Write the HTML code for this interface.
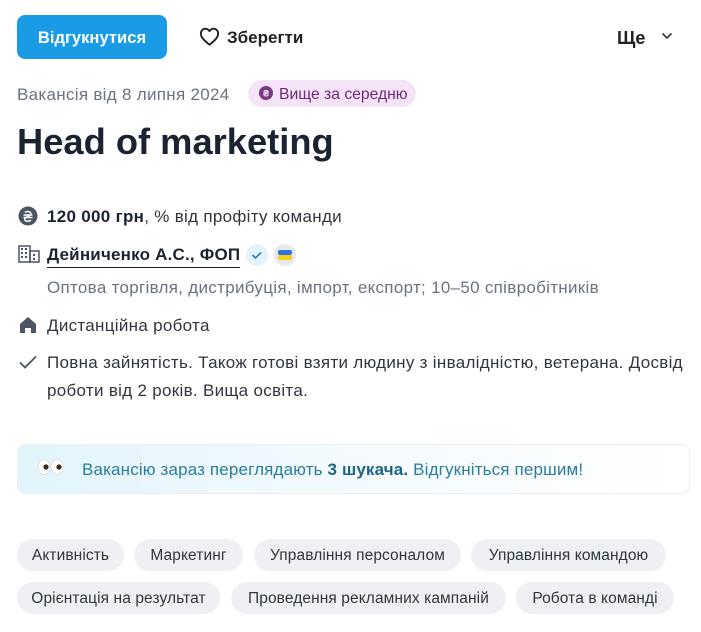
<!DOCTYPE html>
<html><head><meta charset="utf-8"><style>
*{margin:0;padding:0;box-sizing:border-box}
body{width:701px;height:632px;background:#fff;font-family:"Liberation Sans","DejaVu Sans",sans-serif;color:#303640;position:relative;overflow:hidden}
.a{position:absolute;white-space:nowrap}
.btn{left:17px;top:15px;width:150px;height:44px;background:#1a9be6;border-radius:8px;color:#fff;font-weight:bold;font-size:16.6px;line-height:46px;text-align:center}
.t{font-size:17px;line-height:20px;letter-spacing:0.3px}
.tag{position:absolute;height:32px;border-radius:16px;background:#eef0f3;font-size:15.5px;line-height:33px;text-align:center;color:#303640;letter-spacing:0.1px}
</style></head><body>
<div class="a btn">Відгукнутися</div>
<svg class="a" style="left:199px;top:27px" width="21" height="19" viewBox="0 0 24 22"><path d="M12 20.5C5 15 2 11.5 2 7.5 2 4.5 4.3 2 7.2 2c2 0 3.6 1.1 4.8 2.8C13.2 3.1 14.8 2 16.8 2 19.7 2 22 4.5 22 7.5c0 4-3 7.5-10 13z" fill="none" stroke="#222" stroke-width="2.2" stroke-linejoin="round"/></svg>
<div class="a t" style="left:227px;top:28px;font-weight:bold;color:#222;font-size:17px;letter-spacing:0">Зберегти</div>
<div class="a t" style="left:617px;top:28px;font-weight:bold;color:#222;font-size:18px;letter-spacing:0">Ще</div>
<svg class="a" style="left:661px;top:32px" width="12" height="8" viewBox="0 0 12 8"><path d="M1.5 1.5l4.5 4.5 4.5-4.5" fill="none" stroke="#333" stroke-width="1.6"/></svg>
<div class="a t" style="left:17px;top:85px;color:#6b7280">Вакансія від 8 липня 2024</div>
<div class="a" style="left:248px;top:80px;width:168px;height:27px;border-radius:14px;background:#f5e3f7"></div>
<svg class="a" style="left:259px;top:86px" width="14" height="14" viewBox="0 0 14 14"><circle cx="7" cy="7" r="7" fill="#7a3a80"/><text x="7" y="10.5" font-size="9" text-anchor="middle" fill="#f5e3f7" font-family="Liberation Sans" font-weight="bold">₴</text></svg>
<div class="a t" style="left:279px;top:85px;color:#6b2a75;font-size:15.7px;letter-spacing:0">Вище за середню</div>
<div class="a" style="left:17px;top:122px;font-size:36.3px;font-weight:bold;color:#1b2333;line-height:40px">Head of marketing</div>
<svg class="a" style="left:18px;top:206px" width="20" height="20" viewBox="0 0 20 20"><circle cx="10" cy="10" r="9.5" fill="#4b5563"/><path d="M7 6.5c1-1.3 5-1.5 5.8 .8.6 1.8-2 3-4 3.8s-2.6 2.2-1.6 3.4c1 1.2 4.6.9 5.6-.6M5.5 9h9M5.5 11.5h9" fill="none" stroke="#fff" stroke-width="1.5"/></svg>
<div class="a t" style="left:47px;top:207px"><b style="color:#1b2333">120 000 грн</b>, % від профіту команди</div>
<svg class="a" style="left:18px;top:245px" width="22" height="18" viewBox="0 0 22 18"><g fill="none" stroke="#4b5563" stroke-width="1.5"><rect x="1" y="1" width="11" height="16"/><rect x="12" y="6" width="9" height="11"/></g><g fill="#4b5563"><rect x="3" y="3" width="2" height="2"/><rect x="7" y="3" width="2" height="2"/><rect x="3" y="7" width="2" height="2"/><rect x="7" y="7" width="2" height="2"/><rect x="3" y="11" width="2" height="2"/><rect x="7" y="11" width="2" height="2"/><rect x="15" y="9" width="2" height="2"/><rect x="15" y="13" width="2" height="2"/></g></svg>
<div class="a t" style="left:47px;top:245px;font-weight:bold;color:#1b2333;border-bottom:1.5px solid #1b2333;padding-bottom:2px;font-size:17px;letter-spacing:0.2px">Дейниченко А.С., ФОП</div>
<svg class="a" style="left:245px;top:243px" width="52" height="24" viewBox="0 0 52 24"><circle cx="12" cy="12" r="11" fill="#e3f3fc"/><path d="M7.5 12l3 3 5.5-5.5" fill="none" stroke="#1a7fc1" stroke-width="1.6"/><circle cx="40" cy="12" r="11" fill="#e6e8ec"/><rect x="33" y="7" width="14" height="5" rx="2" fill="#2f72d8"/><rect x="33" y="12" width="14" height="5" rx="2" fill="#f5cf1a"/></svg>
<div class="a t" style="left:47px;top:278px;color:#6b7280">Оптова торгівля, дистрибуція, імпорт, експорт; 10–50 співробітників</div>
<svg class="a" style="left:19px;top:316px" width="18" height="18" viewBox="0 0 18 18"><path d="M1 8L9 1l8 7v9h-5v-5H6v5H1z" fill="#4b5563"/></svg>
<div class="a t" style="left:47px;top:316px">Дистанційна робота</div>
<svg class="a" style="left:18px;top:354px" width="20" height="16" viewBox="0 0 20 16"><path d="M2 8.5l5 5L18 2.5" fill="none" stroke="#4b5563" stroke-width="1.8"/></svg>
<div class="a t" style="left:47px;top:349px;line-height:28px">Повна зайнятість. Також готові взяти людину з інвалідністю, ветерана. Досвід<br>роботи від 2 років. Вища освіта.</div>
<div class="a" style="left:17px;top:444px;width:673px;height:50px;border-radius:9px;border:1px solid #eceef1;background:linear-gradient(90deg,#e2f4fc 0%,#f4fafd 50%,#fff 100%)"></div>
<svg class="a" style="left:37px;top:457px" width="28" height="20" viewBox="0 0 28 20"><ellipse cx="7" cy="10" rx="6" ry="7.5" fill="#fff" stroke="#ddd"/><ellipse cx="20" cy="10" rx="6" ry="7.5" fill="#fff" stroke="#ddd"/><circle cx="9" cy="10" r="2.6" fill="#3a2a20"/><circle cx="22" cy="10" r="2.6" fill="#3a2a20"/></svg>
<div class="a t" style="left:82px;top:460px;color:#2a7d9e;font-size:17px;letter-spacing:0.15px">Вакансію зараз переглядають <b style="color:#1d6585">3 шукача.</b> Відгукніться першим!</div>
<div class="tag" style="left:17px;top:539px;width:107px">Активність</div>
<div class="tag" style="left:134px;top:539px;width:109px">Маркетинг</div>
<div class="tag" style="left:254px;top:539px;width:207px">Управління персоналом</div>
<div class="tag" style="left:471px;top:539px;width:195px">Управління командою</div>
<div class="tag" style="left:17px;top:582px;width:203px">Орієнтація на результат</div>
<div class="tag" style="left:231px;top:582px;width:275px">Проведення рекламних кампаній</div>
<div class="tag" style="left:516px;top:582px;width:158px">Робота в команді</div>
</body></html>
